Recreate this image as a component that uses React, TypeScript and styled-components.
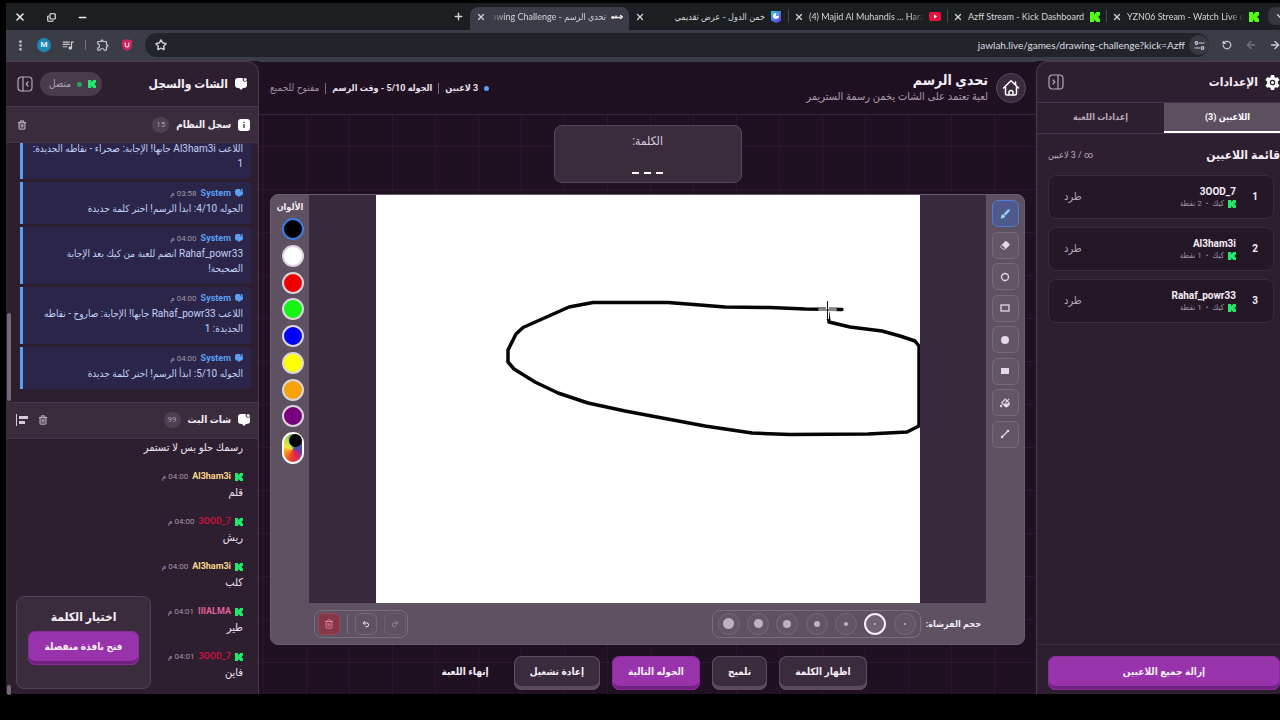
import React from "react";
import styled, { createGlobalStyle, css } from "styled-components";
import { ArrowLeft, ArrowRight, ChevronDown, Copy, Minus, MoreVertical, Plus, RotateCcw, Star, Trash2, X } from "lucide-react";
import { FaFillDrip } from "react-icons/fa";
import { BsEraserFill } from "react-icons/bs";
import { MdOutlineExtension, MdQueueMusic } from "react-icons/md";
import { LuRedo2, LuUndo2 } from "react-icons/lu";

const arabic = `"DejaVu Sans Condensed", "DejaVu Sans", sans-serif`;

const GlobalStyle = createGlobalStyle`
  * { box-sizing: border-box; }
  body { margin: 0; background: #000; overflow: hidden; }
  button, input { font: inherit; color: inherit; }
  button { border: 0; background: none; padding: 0; cursor: pointer; display: inline-flex; align-items: center; justify-content: center; }
  h1, h2, h3, p, ul { margin: 0; padding: 0; }
  ul { list-style: none; }
  svg { display: block; flex: none; }
`;

const Frame = styled.div`
  direction: rtl;
  height: 100vh;
  display: flex;
  flex-direction: column;
  padding: 3px 0 26px 6px;
  overflow: hidden;
  color: #f4eef6;
  font: 400 10px/14px Roboto, ${arabic};
`;

/* Browser chrome */
const TabStrip = styled.div`
  display: flex;
  align-items: flex-end;
  flex: none;
  height: 27px;
  background: #1c1f22;
  color: #d3d5d8;
  font-family: Lato, ${arabic};
`;
const TabSearch = styled.button`
  width: 24px;
  height: 18px;
  margin: 0 -12px 5px 3px;
  border-radius: 7px;
  background: #35373d;
`;
const Tab = styled.div<{ $active?: boolean }>`
  width: 159px;
  height: 23px;
  display: flex;
  align-items: center;
  gap: 5px;
  padding: 0 6px 4px;
  border-radius: 8px 8px 0 0;
  background: ${(p) => (p.$active ? "#3b3c45" : "transparent")};
`;
const TabTitle = styled.span<{ $ltr?: boolean; $fade?: "left" | "right" }>`
  flex: 1;
  overflow: hidden;
  white-space: nowrap;
  direction: ${(p) => (p.$ltr ? "ltr" : "rtl")};
  font-size: 9px;
  ${(p) => p.$fade && css`mask-image: linear-gradient(to ${p.$fade}, #000 88%, transparent);`}
`;
const TabDivider = styled.span`
  width: 1px;
  height: 12px;
  margin: 0 -1px 8px 0;
  background: #43464c;
`;
const NewTab = styled.button`
  width: 24px;
  height: 22px;
  margin-bottom: 3px;
`;
const WindowControls = styled.div`
  display: flex;
  align-items: center;
  height: 26px;
  gap: 17px;
  margin-right: auto;
  padding-left: 7px;
  color: #f0f0f2;
  button { width: 14px; }
`;
const Toolbar = styled.div`
  display: flex;
  align-items: center;
  flex: none;
  height: 31px;
  padding: 0 0 1px 7px;
  background: #3b3c45;
  color: #c9cbd0;
`;
const NavButtons = styled.div`
  display: flex;
  gap: 10px;
  margin: 0 -2px 0 11px;
  button { width: 14px; }
  button:nth-child(2) { color: #70727a; }
`;
const AddressBar = styled.div`
  flex: 1;
  display: flex;
  align-items: center;
  height: 24px;
  padding: 0 0 0 10px;
  border-radius: 12px;
  background: #212428;
`;
const SiteInfo = styled.button`
  width: 20px;
  height: 20px;
  border-radius: 50%;
  background: #373a40;
`;
const Address = styled.input`
  flex: 1;
  min-width: 0;
  direction: ltr;
  text-align: right;
  border: 0;
  padding: 0 4px;
  background: none;
  color: #dddfe2;
  font: 400 10px/16px Lato, sans-serif;
`;
const Extensions = styled.div`
  display: flex;
  align-items: center;
  gap: 10px;
  margin-right: 11px;
  button { width: 14px; }
`;
const Avatar = styled.span`
  width: 14px;
  height: 14px;
  border-radius: 50%;
  background: #1c88b4;
  color: #e2f5ff;
  font-size: 8px;
  font-weight: 700;
  text-align: center;
`;
const ThinLine = styled.span<{ $height: number }>`
  width: 1px;
  height: ${(p) => p.$height}px;
  background: #79707e;
`;

/* Page */
const Page = styled.div`
  flex: 1;
  min-height: 0;
  display: flex;
  background: #1f1022;
`;
const panel = css`
  display: flex;
  flex-direction: column;
  min-height: 0;
  background: #2e1f30;
  border-top: 1px solid #4b3e50;
`;
const Settings = styled.aside`
  ${panel}
  flex: none;
  width: 255px;
  margin-right: -11px;
  border-left: 1px solid #493b4c;
  border-top-left-radius: 12px;
`;
const PanelHeader = styled.header<{ $height: number }>`
  display: flex;
  align-items: center;
  gap: 7px;
  flex: none;
  height: ${(p) => p.$height}px;
  padding: 0 11px;
`;
const PanelTitle = styled.h2`
  font-size: 12px;
  line-height: 18px;
  font-weight: 700;
  white-space: nowrap;
  color: #f4eef6;
`;
const IconButton = styled.button<{ $end?: boolean }>`
  width: 16px;
  height: 16px;
  color: #b3a7b7;
  ${(p) => p.$end && "margin-right: auto;"}
`;
const TabList = styled.div`
  display: flex;
  flex: none;
  height: 32px;
  border-top: 1px solid #44364a;
  border-bottom: 1px solid #44364a;
`;
const PanelTab = styled.button<{ $active?: boolean }>`
  flex: 1;
  font-size: 9px;
  font-weight: 700;
  color: ${(p) => (p.$active ? "#fff" : "#b9adbd")};
  background: ${(p) => (p.$active ? "#5c5060" : "transparent")};
  border-bottom: 2px solid ${(p) => (p.$active ? "#fff" : "transparent")};
`;
const ListHeading = styled.div`
  display: flex;
  align-items: center;
  justify-content: space-between;
  padding: 12px 11px 11px;
  color: #b7abbb;
  font-size: 9px;
  white-space: nowrap;
`;
const PlayerList = styled.ul`
  flex: 1;
  display: flex;
  flex-direction: column;
  gap: 8px;
  padding: 0 17px 0 11px;
`;
const PlayerRow = styled.li`
  display: flex;
  align-items: center;
  height: 44px;
  padding: 0 15px;
  border: 1px solid #3a2b3d;
  border-radius: 8px;
  background: #251826;
`;
const Rank = styled.strong`
  width: 22px;
  font-size: 10px;
`;
const PlayerName = styled.h3`
  font-size: 10px;
  line-height: 13px;
  font-weight: 700;
`;
const PlayerMeta = styled.p`
  display: flex;
  align-items: center;
  gap: 4px;
  font-size: 8px;
  line-height: 12px;
  color: #9f92a4;
`;
const KickButton = styled.button`
  margin-right: auto;
  color: #b2a6b6;
  font-size: 11px;
`;
const SettingsFooter = styled.footer`
  display: flex;
  padding: 11px 11px 4px;
  border-top: 1px solid #3d2f40;
`;
const GameButton = styled.button<{ $tone?: "primary" | "plain"; $wide?: boolean }>`
  height: 34px;
  padding: 0 16px 3px;
  border-radius: 8px;
  font-size: 10px;
  font-weight: 700;
  white-space: nowrap;
  ${(p) => p.$wide && "flex: 1;"}
  ${(p) =>
    p.$tone === "primary"
      ? "background: #9933ab; box-shadow: inset 0 0 0 1px #8b2c9c, inset 0 -4px 0 #702080;"
      : p.$tone === "plain"
      ? "padding: 0 13px 3px;"
      : "background: #3a2b3d; box-shadow: inset 0 0 0 1px #5c4e61, inset 0 -4px 0 #5a4b5e;"}
`;

const Main = styled.main`
  flex: 1;
  min-width: 0;
  display: flex;
  flex-direction: column;
  background:
    repeating-linear-gradient(to right, transparent 0 4px, #2a182e 4px 5px, transparent 5px 43px),
    repeating-linear-gradient(to bottom, transparent 0 42px, #2a182e 42px 43px);
`;
const GameHeader = styled.header`
  display: flex;
  align-items: center;
  gap: 8px;
  flex: none;
  height: 54px;
  padding: 0 10px 0 11px;
  border-top: 1px solid #3b3c45;
  border-bottom: 1px solid #36263a;
  background: #1f1022;
`;
const HomeLink = styled.a`
  display: grid;
  place-items: center;
  width: 30px;
  height: 30px;
  border: 1px solid #594b5e;
  border-radius: 50%;
  background: #3a2b3d;
  color: #fff;
`;
const GameTitle = styled.h1`
  font-size: 14px;
  line-height: 17px;
  font-weight: 700;
`;
const Subtitle = styled.p`
  color: #a99cae;
  font-size: 11px;
  line-height: 16px;
`;
const Status = styled.div`
  display: flex;
  align-items: center;
  gap: 6px;
  margin-right: auto;
  color: #9c90a1;
  white-space: nowrap;
  strong { color: #e9e0ec; font-size: 9px; font-weight: 700; }
`;
const Dot = styled.span<{ $color: string }>`
  width: 5px;
  height: 5px;
  border-radius: 50%;
  background: ${(p) => p.$color};
`;
const WordCard = styled.section`
  align-self: center;
  display: flex;
  flex-direction: column;
  align-items: center;
  flex: none;
  width: 188px;
  height: 58px;
  margin: 10px 0 11px;
  padding-top: 6px;
  border: 1px solid #56485b;
  border-radius: 8px;
  background: #3a2b3d;
  color: #d9cedd;
  font-size: 12px;
  line-height: 18px;
`;
const Blanks = styled.div`
  display: flex;
  gap: 5px;
  margin-top: 22px;
  span { width: 7px; height: 2px; background: #fff; }
`;
const Board = styled.section`
  flex: 1;
  min-height: 0;
  display: flex;
  flex-direction: column;
  margin: 0 11px;
  border: 1px solid #6a5c6e;
  border-radius: 8px;
  background: #5e5161;
`;
const BoardBody = styled.div`
  flex: 1;
  min-height: 0;
  display: flex;
`;
const Tools = styled.div`
  width: 38px;
  display: flex;
  flex-direction: column;
  justify-content: space-between;
  align-items: center;
  height: 248px;
  margin-top: 5px;
`;
const Tool = styled.button<{ $active?: boolean }>`
  width: 27px;
  height: 27px;
  border: 1px solid ${(p) => (p.$active ? "#4f7ed0" : "#766a7a")};
  border-radius: 6px;
  background: ${(p) => (p.$active ? "#50598c" : "#625665")};
  color: ${(p) => (p.$active ? "#9bd4fa" : "#e2dae4")};
`;
const CanvasArea = styled.div`
  flex: 1;
  min-width: 0;
  display: flex;
  justify-content: center;
  background: #3a2a3d;
`;
const Canvas = styled.svg`
  height: 100%;
  aspect-ratio: 4 / 3;
  background: #fff;
`;
const Palette = styled.div`
  width: 38px;
  padding-top: 4px;
  text-align: center;
  font-size: 9px;
  line-height: 16px;
  font-weight: 700;
  white-space: nowrap;
`;
const Swatches = styled.div`
  display: flex;
  flex-direction: column;
  align-items: center;
  justify-content: space-between;
  height: 246px;
  margin-top: 3px;
  padding-left: 5px;
`;
const Swatch = styled.button<{ $color: string; $active?: boolean }>`
  width: 22px;
  height: 22px;
  border: 2px solid ${(p) => (p.$active ? "#3b7de0" : "#dcd5de")};
  border-radius: 50%;
  background: ${(p) => p.$color};
`;
const CustomColor = styled.button`
  align-items: flex-start;
  justify-content: flex-start;
  width: 22px;
  height: 32px;
  border: 2px solid #fff;
  border-radius: 11px;
  background: conic-gradient(from 0deg at 50% 55%, #5a9e3c, #3c5ab0 50deg, #6a3ca0 100deg, #d0246a 140deg, #f03c28 190deg, #f79a1e 250deg, #ffe640 290deg, #b4dc50 330deg, #5a9e3c);
  span { width: 13px; height: 13px; border-radius: 50%; background: #000; }
`;
const BoardFooter = styled.footer`
  display: flex;
  align-items: center;
  gap: 5px;
  flex: none;
  height: 41px;
  padding: 0 43px;
  font-size: 9px;
  font-weight: 700;
  white-space: nowrap;
`;
const ControlGroup = styled.div<{ $width: number; $end?: boolean }>`
  display: flex;
  align-items: center;
  justify-content: space-between;
  width: ${(p) => p.$width}px;
  height: 28px;
  padding: 0 4px 0 5px;
  border: 1px solid #7b6f7f;
  border-radius: 8px;
  ${(p) => p.$end && "margin-right: auto; padding: 0 1px 0 3px;"}
`;
const SizeButton = styled.button<{ $active?: boolean }>`
  width: 22px;
  height: 22px;
  border: ${(p) => (p.$active ? "2px solid #f4f0f5" : "1px solid #766a7a")};
  border-radius: 50%;
  background: ${(p) => (p.$active ? "#716575" : "#625665")};
`;
const BrushDot = styled.span<{ $size: number }>`
  width: ${(p) => p.$size}px;
  height: ${(p) => p.$size}px;
  border-radius: 50%;
  background: #bdb3c0;
`;
const HistoryButton = styled.button<{ $danger?: boolean }>`
  width: 22px;
  height: 22px;
  border: 1px solid ${(p) => (p.$danger ? "#a8404f" : "#766a7a")};
  border-radius: 6px;
  background: ${(p) => (p.$danger ? "#823848" : "transparent")};
  color: ${(p) => (p.$danger ? "#f78c96" : "#efe8f1")};
  &:disabled { color: #95899a; border-color: #6b5f6f; }
`;
const Actions = styled.div`
  display: flex;
  justify-content: center;
  gap: 12px;
  flex: none;
  padding: 11px 0 4px;
`;

const ChatPanel = styled.aside`
  ${panel}
  flex: none;
  width: 253px;
  position: relative;
  border-right: 1px solid #493b4c;
  border-top-right-radius: 12px;
`;
const Connection = styled.span`
  display: flex;
  align-items: center;
  gap: 6px;
  height: 24px;
  margin-right: auto;
  padding: 0 6px 0 9px;
  border-radius: 12px;
  background: #483b4b;
  color: #b1a5b5;
`;
const Feed = styled.section<{ $share: number }>`
  flex: ${(p) => p.$share} 1 0;
  min-height: 0;
  display: flex;
  flex-direction: column;
`;
const FeedHeader = styled.header`
  display: flex;
  align-items: center;
  gap: 7px;
  flex: none;
  height: 37px;
  padding: 0 8px;
  border-top: 1px solid #45374a;
  border-bottom: 1px solid #45374a;
  background: #3a2b3d;
  h3 { font-size: 10px; line-height: 16px; font-weight: 700; }
`;
const FeedTools = styled.div`
  display: flex;
  gap: 5px;
  margin-right: auto;
`;
const Count = styled.span`
  padding: 0 4px;
  border-radius: 8px;
  background: #4d4050;
  color: #a99cae;
  font-size: 8px;
  line-height: 16px;
`;
const Log = styled.ul`
  flex: 1;
  min-height: 0;
  display: flex;
  flex-direction: column;
  justify-content: flex-end;
  gap: 3px;
  overflow: hidden;
  padding: 0 7px 13px 14px;
`;
const LogItem = styled.li`
  flex: none;
  padding: 4px 8px 8px;
  border-left: 3px solid #5a9ff2;
  border-radius: 0 4px 4px 0;
  background: #2a2549;
  color: #c3d2f7;
  line-height: 15px;
  white-space: pre;
`;
const Messages = styled(Log)`
  gap: 13px;
  padding: 0 15px 13px;
`;
const Message = styled.li`
  flex: none;
  color: #efe6f2;
  font-size: 11px;
  line-height: 17px;
`;
const Byline = styled.div<{ $color: string }>`
  display: flex;
  align-items: center;
  gap: 4px;
  height: 15px;
  font-size: 8px;
  color: #a396a8;
  strong { color: ${(p) => p.$color}; font-size: 9px; font-weight: 700; }
`;
const ScrollThumb = styled.span<{ $top: number; $height: number }>`
  position: absolute;
  left: 1px;
  top: ${(p) => p.$top}px;
  width: 4px;
  height: ${(p) => p.$height}px;
  border-radius: 2px;
  background: #77697b;
`;
const WordPicker = styled.section`
  position: absolute;
  left: 10px;
  bottom: 5px;
  width: 135px;
  height: 93px;
  display: flex;
  flex-direction: column;
  align-items: center;
  gap: 5px;
  padding: 11px 11px 0;
  border: 1px solid #504355;
  border-radius: 8px;
  background: #3a2b3d;
  h3 { font-size: 12px; line-height: 18px; }
  button { width: 111px; padding: 0 0 3px; }
`;

const KickLogo = ({ size = 9, color = "#1fe86a" }: { size?: number; color?: string }) => (
  <svg width={size} height={size} viewBox="0 0 9 9" fill={color} aria-hidden="true">
    <path d="M0 0h3.600v2h.8V1h1.100V0H9v3.200H8v1H7v.6h1v1h1V9H5.500V8H4.400V7h-.8v2H0z" />
  </svg>
);
const ChatIcon = ({ size = 12, color = "#fff" }: { size?: number; color?: string }) => (
  <svg width={size} height={size} viewBox="0 0 12 12" fill={color} aria-hidden="true">
    <path d="M3 0h5a2.400 2.400 0 0 0 3.700 3c.2.5.3 1 .3 1.700v2.100A3.200 3.200 0 0 1 8.800 10H8l-2 2-2-2h-.8A3.200 3.200 0 0 1 0 6.800V3a3 3 0 0 1 3-3z" />
    <circle cx="10.200" cy="1.600" r="1.500" />
  </svg>
);
const GearIcon = () => (
  <svg width="15" height="15" viewBox="0 0 24 24" aria-hidden="true">
    <path fill="#fff" d="M9.500 0h5l.8 3.400 2 1.100L20.700 3.500l2.500 4.300-2.600 2.500v3.400l2.600 2.500-2.500 4.300-3.400-1-2 1.100-.8 3.400h-5l-.8-3.400-2-1.100-3.400 1L.8 16.200l2.600-2.500v-3.400L.8 7.800l2.500-4.300 3.400 1 2-1.100z" />
    <circle cx="12" cy="12" r="3.500" fill="none" stroke="#2e1f30" strokeWidth="2" />
  </svg>
);
const InfoIcon = () => (
  <svg width="12" height="12" viewBox="0 0 12 12" aria-hidden="true">
    <rect width="12" height="12" rx="3" fill="#fff" />
    <path d="M6 5v4M6 2.700v1.200" stroke="#3a2b3d" strokeWidth="1.300" />
  </svg>
);
const AlignIcon = () => (
  <svg width="12" height="12" viewBox="0 0 12 12" fill="#d5cbd8" aria-hidden="true">
    <path d="M0 0h1v12H0zM3 2h9v3H3zM3 7h6v3H3z" />
  </svg>
);
const CollapseIcon = ({ side }: { side: "left" | "right" }) => (
  <svg width="16" height="16" viewBox="0 0 16 16" fill="none" stroke="currentColor" strokeWidth="1.200" strokeLinecap="round" strokeLinejoin="round" aria-hidden="true">
    <rect x="1" y="1" width="14" height="14" rx="3.500" />
    {side === "left" ? <path d="M6 1v14M11 6L9.200 8 11 10" /> : <path d="M10 1v14M5 6l1.800 2L5 10" />}
  </svg>
);
const HomeIcon = () => (
  <svg width="18" height="18" viewBox="0 0 18 18" fill="none" stroke="currentColor" strokeWidth="1.500" strokeLinecap="round" strokeLinejoin="round" aria-hidden="true">
    <path d="M1.500 9L9 1.800 16.500 9M13.500 5.500V3M3.500 8v6.500A1.500 1.500 0 0 0 5 16h8a1.500 1.500 0 0 0 1.500-1.500V8M7 16v-2.500a2 2 0 0 1 4 0V16" />
  </svg>
);
const TuneIcon = () => (
  <svg width="11" height="9" viewBox="0 0 11 9" fill="none" stroke="currentColor" strokeWidth="1.200" aria-hidden="true">
    <circle cx="2.500" cy="2" r="1.300" /><path d="M5 2h5.500M.5 7H6" /><circle cx="8.500" cy="7" r="1.300" />
  </svg>
);
const BrushIcon = () => (
  <svg width="10" height="10" viewBox="0 0 10 10" fill="currentColor" aria-hidden="true">
    <path d="M8 .5a1.100 1.100 0 0 1 1.600 1.500L5.600 6.600 3.800 4.800zM3.300 5.300l1.800 1.800C5 8.600 3.500 9.600.5 9.400c.7-.7.6-1.300.8-2.300.2-1.100 1-1.700 2-1.800z" />
  </svg>
);
const JawlahMark = () => (
  <svg width="12" height="8" viewBox="0 0 12 8" fill="none" stroke="#eee" strokeWidth="1.500" aria-hidden="true">
    <path d="M0 4.500h9M9 2.500a1.500 1.500 0 1 1-.1 3M5 2.500v3M2 3v3M11 3v2" />
  </svg>
);
const SlidesMark = () => (
  <svg width="12" height="12" viewBox="0 0 12 12" aria-hidden="true">
    <defs><linearGradient id="slides" x1="0" y1="0" x2="1" y2="1"><stop stopColor="#28d4d8" /><stop offset="1" stopColor="#7424e0" /></linearGradient></defs>
    <path fill="url(#slides)" d="M1 0h10v10l-2 1-3 1-4-2-1-1z" />
    <circle cx="6" cy="5" r="3" fill="#fff" /><path d="M6 5V2a3 3 0 0 1 3 3z" fill="#5a9ce8" />
  </svg>
);
const VideoMark = () => (
  <svg width="12" height="9" viewBox="0 0 12 9" aria-hidden="true">
    <rect width="12" height="9" rx="2" fill="#e4123c" /><path d="M5 2.500v4l3-2z" fill="#fff" />
  </svg>
);
const ShieldMark = () => (
  <svg width="10" height="12" viewBox="0 0 10 12" aria-hidden="true">
    <path fill="#cf2460" d="M5 0l5 1.500V6c0 3-2 5-5 6-3-1-5-3-5-6V1.500z" />
    <path d="M3.200 3.500v2.700a1.800 1.800 0 0 0 3.600 0V3.500" fill="none" stroke="#fbd5e2" strokeWidth="1.200" />
  </svg>
);

type TabInfo = { title: string; icon: React.ReactNode; ltr?: boolean; fade?: "left" | "right"; active?: boolean };
const kickGreen = <KickLogo size={10} color="#53fc18" />;
const tabs: TabInfo[] = [
  { title: "YZN06 Stream - Watch Live on", icon: kickGreen, ltr: true, fade: "right" },
  { title: "Azff Stream - Kick Dashboard", icon: kickGreen, ltr: true },
  { title: "(4) Majid Al Muhandis ... Haram", icon: <VideoMark />, ltr: true, fade: "right" },
  { title: "خمن الدول - عرض تقديمي", icon: <SlidesMark /> },
  { title: "تحدي الرسم - Drawing Challenge", icon: <JawlahMark />, fade: "left", active: true },
];

const players = [
  { name: "3OOD_7", points: 2 },
  { name: "Al3ham3i", points: 1 },
  { name: "Rahaf_powr33", points: 1 },
];

const log: { time?: string; text: string }[] = [
  { text: "اللاعب Al3ham3i جابها! الإجابة: صحراء - نقاطه الجديدة:\n1" },
  { time: "03:58 م", text: "الجوله 4/10: ابدأ الرسم! اختر كلمة جديدة" },
  { time: "04:00 م", text: "Rahaf_powr33 انضم للعبة من كيك بعد الإجابة\nالصحيحة!" },
  { time: "04:00 م", text: "اللاعب Rahaf_powr33 جابها! الإجابة: صاروخ - نقاطه\nالجديدة: 1" },
  { time: "04:00 م", text: "الجوله 5/10: ابدأ الرسم! اختر كلمة جديدة" },
];

const cream = "#f7d98c";
const crimson = "#c4103e";
const messages: { name?: string; color?: string; time?: string; text: string }[] = [
  { text: "رسمك حلو بس لا تستمر" },
  { name: "Al3ham3i", color: cream, time: "04:00 م", text: "قلم" },
  { name: "3OOD_7", color: crimson, time: "04:00 م", text: "ريش" },
  { name: "Al3ham3i", color: cream, time: "04:00 م", text: "كلب" },
  { name: "IIIALMA", color: "#e0609a", time: "04:01 م", text: "طير" },
  { name: "3OOD_7", color: crimson, time: "04:01 م", text: "فاين" },
];

const outline = { fill: "none", stroke: "currentColor", strokeWidth: 1.3 };
const tools = [
  { label: "فرشاة", icon: <BrushIcon /> },
  { label: "ممحاة", icon: <BsEraserFill size={10} /> },
  { label: "دائرة", icon: <svg width="10" height="10"><circle cx="5" cy="5" r="3.500" {...outline} /></svg> },
  { label: "مستطيل", icon: <svg width="10" height="10"><rect x="1" y="2" width="8" height="6" {...outline} /></svg> },
  { label: "دائرة ممتلئة", icon: <svg width="10" height="10"><circle cx="5" cy="5" r="4" fill="currentColor" /></svg> },
  { label: "مستطيل ممتلئ", icon: <svg width="10" height="10"><rect x="1" y="2" width="8" height="6" fill="currentColor" /></svg> },
  { label: "تعبئة", icon: <FaFillDrip size={10} style={{ transform: "scaleX(-1)" }} /> },
  { label: "خط", icon: <svg width="10" height="10" fill="currentColor"><path d="M2 8l6-6" {...outline} /><circle cx="2" cy="8" r="1.300" /><circle cx="8" cy="2" r="1.300" /></svg> },
];
const colors = ["#000", "#fff", "#ee0000", "#15f515", "#0000f5", "#ffff00", "#f5a30a", "#78007c"];
const brushSizes = [2, 2, 4, 6, 8, 9, 11];

export default function App() {
  return (
    <Frame>
      <GlobalStyle />
      <TabStrip>
        <TabSearch aria-label="بحث في علامات التبويب"><ChevronDown size={10} strokeWidth={3} /></TabSearch>
        {tabs.map((t, i) => (
          <React.Fragment key={t.title}>
            <Tab $active={t.active}>
              {t.icon}
              <TabTitle $ltr={t.ltr} $fade={t.fade}>{t.title}</TabTitle>
              <button aria-label="إغلاق"><X size={10} strokeWidth={3} /></button>
            </Tab>
            {i < 3 && <TabDivider />}
          </React.Fragment>
        ))}
        <NewTab aria-label="علامة تبويب جديدة"><Plus size={11} strokeWidth={3} /></NewTab>
        <WindowControls>
          <button aria-label="تصغير"><Minus size={11} strokeWidth={3} /></button>
          <button aria-label="استعادة"><Copy size={9} strokeWidth={3} style={{ transform: "scaleY(-1)" }} /></button>
          <button aria-label="إغلاق النافذة"><X size={12} strokeWidth={3} /></button>
        </WindowControls>
      </TabStrip>
      <Toolbar>
        <NavButtons>
          <button aria-label="رجوع"><ArrowRight size={12} strokeWidth={3} /></button>
          <button aria-label="تقدم"><ArrowLeft size={12} strokeWidth={3} /></button>
          <button aria-label="تحديث"><RotateCcw size={10} strokeWidth={3} /></button>
        </NavButtons>
        <AddressBar>
          <SiteInfo aria-label="معلومات الموقع"><TuneIcon /></SiteInfo>
          <Address aria-label="العنوان" defaultValue="jawlah.live/games/drawing-challenge?kick=Azff" />
          <button aria-label="إشارة مرجعية"><Star size={12} strokeWidth={3} /></button>
        </AddressBar>
        <Extensions>
          <button aria-label="الحماية"><ShieldMark /></button>
          <button aria-label="الإضافات"><MdOutlineExtension size={14} /></button>
          <ThinLine $height={10} />
          <button aria-label="الوسائط"><MdQueueMusic size={14} /></button>
          <Avatar>M</Avatar>
          <button aria-label="القائمة"><MoreVertical size={13} strokeWidth={3} /></button>
        </Extensions>
      </Toolbar>

      <Page>
        <Settings>
          <PanelHeader $height={40}>
            <GearIcon />
            <PanelTitle>الإعدادات</PanelTitle>
            <IconButton $end aria-label="طي الإعدادات"><CollapseIcon side="right" /></IconButton>
          </PanelHeader>
          <TabList role="tablist">
            <PanelTab role="tab" aria-selected $active>اللاعبين (3)</PanelTab>
            <PanelTab role="tab" aria-selected={false}>إعدادات اللعبة</PanelTab>
          </TabList>
          <ListHeading>
            <PanelTitle>قائمة اللاعبين</PanelTitle>
            <span>∞ / 3 لاعبين</span>
          </ListHeading>
          <PlayerList>
            {players.map((p, i) => (
              <PlayerRow key={p.name}>
                <Rank>{i + 1}</Rank>
                <div>
                  <PlayerName>{p.name}</PlayerName>
                  <PlayerMeta><KickLogo size={8} /><span>كيك</span><span>•</span><span>{p.points} نقطة</span></PlayerMeta>
                </div>
                <KickButton>طرد</KickButton>
              </PlayerRow>
            ))}
          </PlayerList>
          <SettingsFooter><GameButton $tone="primary" $wide>إزالة جميع اللاعبين</GameButton></SettingsFooter>
        </Settings>

        <Main>
          <GameHeader>
            <HomeLink href="#" aria-label="الرئيسية"><HomeIcon /></HomeLink>
            <div>
              <GameTitle>تحدي الرسم</GameTitle>
              <Subtitle>لعبة تعتمد على الشات يخمن رسمة الستريمر</Subtitle>
            </div>
            <Status>
              <Dot $color="#5a9ff2" />
              <strong>3 لاعبين</strong>
              <ThinLine $height={11} />
              <strong>الجوله 5/10 - وقت الرسم</strong>
              <ThinLine $height={11} />
              <span>مفتوح للجميع</span>
            </Status>
          </GameHeader>
          <WordCard>
            الكلمة:
            <Blanks><span /><span /><span /></Blanks>
          </WordCard>
          <Board>
            <BoardBody>
              <Tools>
                {tools.map((t, i) => <Tool key={t.label} $active={i === 0} aria-label={t.label}>{t.icon}</Tool>)}
              </Tools>
              <CanvasArea>
                <Canvas viewBox="0 0 544 408" role="img" aria-label="لوحة الرسم">
                  <path
                    d="M466 114.500L429 114 394 112.500 349 112 324 110 292 107.500 217 107.500 193 112 147 132.500 140 139 132 155 132 167 138 174 159 187 182 198 212 208 249 216 329 231 376 238 414 239.500 492 239 531 237 543 231 543 151 539 146 524 141 506 136 474 132 453 127 451.500 116"
                    fill="none" stroke="#050505" strokeWidth="3.500" strokeLinecap="round" strokeLinejoin="round"
                  />
                  <path d="M451.500 106v18M442.500 115h18" stroke="#fff" strokeWidth="3" />
                  <path d="M451.500 106v18M442.500 115h18" stroke="#111" strokeWidth="1" />
                </Canvas>
              </CanvasArea>
              <Palette>
                الألوان
                <Swatches>
                  {colors.map((c, i) => <Swatch key={c} $color={c} $active={i === 0} aria-label={c} />)}
                  <CustomColor aria-label="لون مخصص"><span /></CustomColor>
                </Swatches>
              </Palette>
            </BoardBody>
            <BoardFooter>
              حجم الفرشاة:
              <ControlGroup $width={209}>
                {brushSizes.map((s, i) => <SizeButton key={i} $active={i === 1} aria-label={`حجم ${i + 1}`}><BrushDot $size={s} /></SizeButton>)}
              </ControlGroup>
              <ControlGroup $width={94} $end>
                <HistoryButton disabled aria-label="إعادة"><LuRedo2 size={8} strokeWidth={3} /></HistoryButton>
                <HistoryButton aria-label="تراجع"><LuUndo2 size={8} strokeWidth={3} /></HistoryButton>
                <ThinLine $height={20} />
                <HistoryButton $danger aria-label="مسح"><Trash2 size={10} /></HistoryButton>
              </ControlGroup>
            </BoardFooter>
          </Board>
          <Actions>
            <GameButton>اظهار الكلمة</GameButton>
            <GameButton>تلميح</GameButton>
            <GameButton $tone="primary">الجوله التالية</GameButton>
            <GameButton>إعادة تشغيل</GameButton>
            <GameButton $tone="plain">إنهاء اللعبة</GameButton>
          </Actions>
        </Main>

        <ChatPanel>
          <PanelHeader $height={44}>
            <ChatIcon />
            <PanelTitle>الشات والسجل</PanelTitle>
            <Connection><KickLogo size={8} /><Dot $color="#24a85a" />متصل</Connection>
            <IconButton aria-label="طي الشات"><CollapseIcon side="left" /></IconButton>
          </PanelHeader>
          <Feed $share={295}>
            <FeedHeader>
              <InfoIcon /><h3>سجل النظام</h3><Count>15</Count>
              <FeedTools><IconButton aria-label="مسح السجل"><Trash2 size={10} strokeWidth={3} /></IconButton></FeedTools>
            </FeedHeader>
            <Log>
              {log.map((l, i) => (
                <LogItem key={i}>
                  {l.time && <Byline $color="#5a9ff2"><ChatIcon size={8} color="#5a9ff2" /><strong>System</strong><span>{l.time}</span></Byline>}
                  {l.text}
                </LogItem>
              ))}
            </Log>
          </Feed>
          <Feed $share={292}>
            <FeedHeader>
              <ChatIcon /><h3>شات البث</h3><Count>99</Count>
              <FeedTools>
                <IconButton aria-label="مسح الشات"><Trash2 size={10} strokeWidth={3} /></IconButton>
                <IconButton aria-label="محاذاة"><AlignIcon /></IconButton>
              </FeedTools>
            </FeedHeader>
            <Messages>
              {messages.map((m, i) => (
                <Message key={i}>
                  {m.name && <Byline $color={m.color ?? cream}><KickLogo size={8} /><strong>{m.name}</strong><span>{m.time}</span></Byline>}
                  {m.text}
                </Message>
              ))}
            </Messages>
          </Feed>
          <ScrollThumb $top={251} $height={88} />
          <ScrollThumb $top={623} $height={10} />
          <WordPicker>
            <h3>اختيار الكلمة</h3>
            <GameButton $tone="primary">فتح نافذة منفصلة</GameButton>
          </WordPicker>
        </ChatPanel>
      </Page>
    </Frame>
  );
}
